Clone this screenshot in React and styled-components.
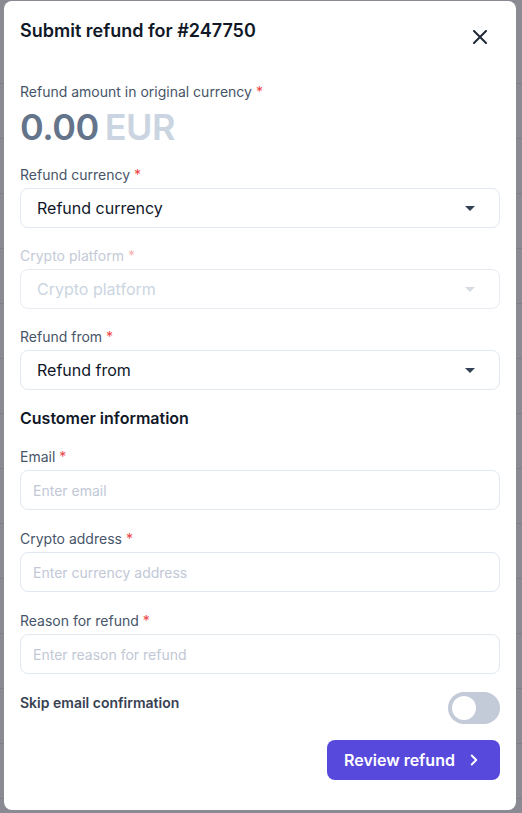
import styled, { createGlobalStyle } from 'styled-components';
import { ChevronRight } from 'lucide-react';

const GlobalStyle = createGlobalStyle`
  html, body {
    margin: 0;
    padding: 0;
    background: #8a8a93;
  }
  * { box-sizing: border-box; }
  body {
    font-family: 'Inter', 'Liberation Sans', sans-serif;
    -webkit-font-smoothing: antialiased;
  }
`;

const Backdrop = styled.div`
  width: 522px;
  height: 813px;
  overflow: hidden;
  background-color: #8a8a93;
  background-image: repeating-linear-gradient(
    to bottom,
    transparent 0,
    transparent 54px,
    #7f7f88 54px,
    #7f7f88 55px
  );
  background-position: 0 29px;
  padding: 1px 0 0 4px;
`;

const Modal = styled.div`
  width: 512px;
  height: 809px;
  background: #ffffff;
  border-radius: 8px;
  padding: 16px 16px 30px;
  display: flex;
  flex-direction: column;
`;

const Header = styled.div`
  display: flex;
  justify-content: space-between;
  align-items: flex-start;
  margin-bottom: 37px;
`;

const Title = styled.h2`
  margin: 0;
  font-size: 18px;
  line-height: 28px;
  font-weight: 600;
  color: #111827;
`;

const CloseButton = styled.button`
  border: none;
  background: none;
  padding: 0;
  margin: 13px 13px 0 0;
  width: 14px;
  height: 14px;
  display: flex;
  cursor: pointer;

  svg {
    width: 14px;
    height: 14px;
    stroke: #1f2937;
    stroke-width: 2;
    stroke-linecap: round;
  }
`;

const Field = styled.div`
  display: flex;
  flex-direction: column;
  margin-bottom: ${p => p.$space || 18}px;
`;

const Label = styled.label`
  font-size: 14px;
  line-height: 20px;
  color: ${p => (p.$disabled ? '#c4cad6' : '#475569')};
  margin-bottom: ${p => p.$gap || 3}px;

  span {
    color: ${p => (p.$disabled ? '#f5b5b5' : '#ef4444')};
    margin-left: 4px;
  }
`;

const Amount = styled.div`
  font-size: 36px;
  line-height: 40px;
  font-weight: 600;
  letter-spacing: -0.5px;
  color: #64748b;

  span {
    color: #cbd5e1;
    margin-left: 6px;
  }
`;

const Select = styled.div`
  height: 40px;
  border: 1px solid ${p => (p.$disabled ? '#e8ecf2' : '#e2e8f0')};
  border-radius: 8px;
  display: flex;
  align-items: center;
  justify-content: space-between;
  padding: 0 24px 0 16px;
  font-size: 16px;
  color: ${p => (p.$disabled ? '#cbd5e1' : '#0f172a')};

  svg {
    width: 10px;
    height: 5px;
    fill: ${p => (p.$disabled ? '#d6dbe3' : '#334155')};
  }
`;

const Input = styled.input`
  height: 40px;
  border: 1px solid #e2e8f0;
  border-radius: 8px;
  padding: 0 12px;
  font-family: inherit;
  font-size: 14px;
  color: #0f172a;
  outline: none;

  &::placeholder {
    color: #c1c8d6;
  }
`;

const Section = styled.h3`
  margin: -2px 0 17px;
  font-size: 16px;
  line-height: 24px;
  font-weight: 600;
  color: #111827;
`;

const ToggleRow = styled.div`
  display: flex;
  justify-content: space-between;
  align-items: flex-start;
  margin: -1px 0 16px;
`;

const ToggleLabel = styled.div`
  font-size: 14px;
  line-height: 20px;
  font-weight: 600;
  color: #374151;
  margin-top: 1px;
`;

const Toggle = styled.div`
  width: 52px;
  height: 32px;
  border-radius: 16px;
  background: #c3cad8;
  display: flex;
  align-items: center;
  padding: 0 4px;

  &::after {
    content: '';
    width: 24px;
    height: 24px;
    border-radius: 50%;
    background: #ffffff;
  }
`;

const Footer = styled.div`
  display: flex;
  justify-content: flex-end;
`;

const PrimaryButton = styled.button`
  height: 40px;
  width: 173px;
  border: none;
  border-radius: 8px;
  background: #5849dd;
  color: #ffffff;
  font-family: inherit;
  font-size: 16px;
  font-weight: 600;
  display: flex;
  align-items: center;
  gap: 10px;
  padding: 0 0 0 17px;
  cursor: pointer;
`;

const Caret = () => (
  <svg viewBox="0 0 10 5">
    <path d="M0 0h10L5 5z" />
  </svg>
);

function SelectField({ label, disabled }) {
  return (
    <Field>
      <Label $disabled={disabled}>
        {label}
        <span>*</span>
      </Label>
      <Select $disabled={disabled}>
        {label}
        <Caret />
      </Select>
    </Field>
  );
}

function InputField({ label, placeholder }) {
  return (
    <Field $space={19}>
      <Label>
        {label}
        <span>*</span>
      </Label>
      <Input placeholder={placeholder} />
    </Field>
  );
}

export default function App() {
  return (
    <>
      <GlobalStyle />
      <Backdrop>
        <Modal>
          <Header>
            <Title>Submit refund for #247750</Title>
            <CloseButton aria-label="Close">
              <svg viewBox="0 0 14 14">
                <path d="M1 1l12 12M13 1L1 13" />
              </svg>
            </CloseButton>
          </Header>

          <Field>
            <Label $gap={5}>
              Refund amount in original currency
              <span>*</span>
            </Label>
            <Amount>
              0.00<span>EUR</span>
            </Amount>
          </Field>

          <SelectField label="Refund currency" />
          <SelectField label="Crypto platform" disabled />
          <SelectField label="Refund from" />

          <Section>Customer information</Section>

          <InputField label="Email" placeholder="Enter email" />
          <InputField label="Crypto address" placeholder="Enter currency address" />
          <InputField label="Reason for refund" placeholder="Enter reason for refund" />

          <ToggleRow>
            <ToggleLabel>Skip email confirmation</ToggleLabel>
            <Toggle />
          </ToggleRow>

          <Footer>
            <PrimaryButton>
              Review refund
              <ChevronRight size={18} strokeWidth={2.5} />
            </PrimaryButton>
          </Footer>
        </Modal>
      </Backdrop>
    </>
  );
}
